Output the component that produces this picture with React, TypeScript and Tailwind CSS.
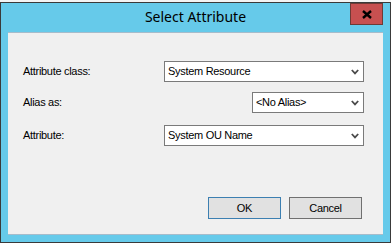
import React from 'react'

const uiFont = { fontFamily: '"Liberation Sans", Arial, sans-serif' }

function Chevron(): JSX.Element {
  return (
    <svg width="8" height="6" viewBox="0 0 8 6" aria-hidden>
      <path d="M0.8 1 L4 4.4 L7.2 1" fill="none" stroke="#4a4a4a" strokeWidth="1.8" />
    </svg>
  )
}

type SelectProps = { value: string; className?: string }

function ComboBox({ value, className = '' }: SelectProps): JSX.Element {
  return (
    <div className={`flex h-[21px] items-center justify-between border border-[#7a7a7a] bg-white pl-[3px] pr-[4px] ${className}`}>
      <span className="text-[11px] leading-none tracking-[-0.3px] text-black">{value}</span>
      <Chevron />
    </div>
  )
}

function Row({ label, children, className = '' }: { label: string; children: React.ReactNode; className?: string }): JSX.Element {
  return (
    <div className={`flex h-[21px] items-center ${className}`}>
      <span className="w-[140px] shrink-0 text-[11px] leading-none tracking-[-0.3px] text-black">{label}</span>
      <div className="flex flex-1 justify-end">{children}</div>
    </div>
  )
}

export default function App(): JSX.Element {
  return (
    <div className="h-[243px] w-[391px] bg-[#f4f4f4] pt-[2px]" style={uiFont}>
      <div className="flex h-[241px] flex-col border border-[#3a3a3a] bg-[#66caea]">
        <div className="relative flex h-[29px] shrink-0 items-center justify-center">
          <span className="pb-[1px] text-[14px] leading-none text-black" style={{ fontFamily: '"Noto Sans", "Open Sans", sans-serif' }}>
            Select Attribute
          </span>
          <button
            type="button"
            className="absolute right-[7px] top-0 grid h-[22px] w-[33px] place-items-center border border-[#6e3a35] bg-[#c75050]"
          >
            <svg width="10" height="9" viewBox="0 0 10 9" aria-hidden>
              <path d="M1 1 L9 8 M9 1 L1 8" stroke="#000" strokeWidth="2.4" />
            </svg>
          </button>
        </div>
        <div className="mx-[7px] flex h-[203px] flex-col border-y border-[#a6bccb] bg-[#f0f0f0] pl-[15px] pr-[19px]">
          <Row label="Attribute class:" className="mt-[28px]">
            <ComboBox value="System Resource" className="w-[200px]" />
          </Row>
          <Row label="Alias as:" className="mt-[10px]">
            <ComboBox value="<No Alias>" className="w-[112px]" />
          </Row>
          <Row label="Attribute:" className="mt-[12px]">
            <ComboBox value="System OU Name" className="w-[200px]" />
          </Row>
          <div className="mt-auto mb-[15px] mr-[2px] flex justify-end gap-[8px]">
            <button type="button" className="h-[22px] w-[73px] border border-[#3c7fb1] bg-[#e1e1e1] text-[11px] tracking-[-0.3px] text-black">
              OK
            </button>
            <button type="button" className="h-[22px] w-[73px] border border-[#707070] bg-[#e1e1e1] text-[11px] tracking-[-0.3px] text-black">
              Cancel
            </button>
          </div>
        </div>
      </div>
    </div>
  )
}
